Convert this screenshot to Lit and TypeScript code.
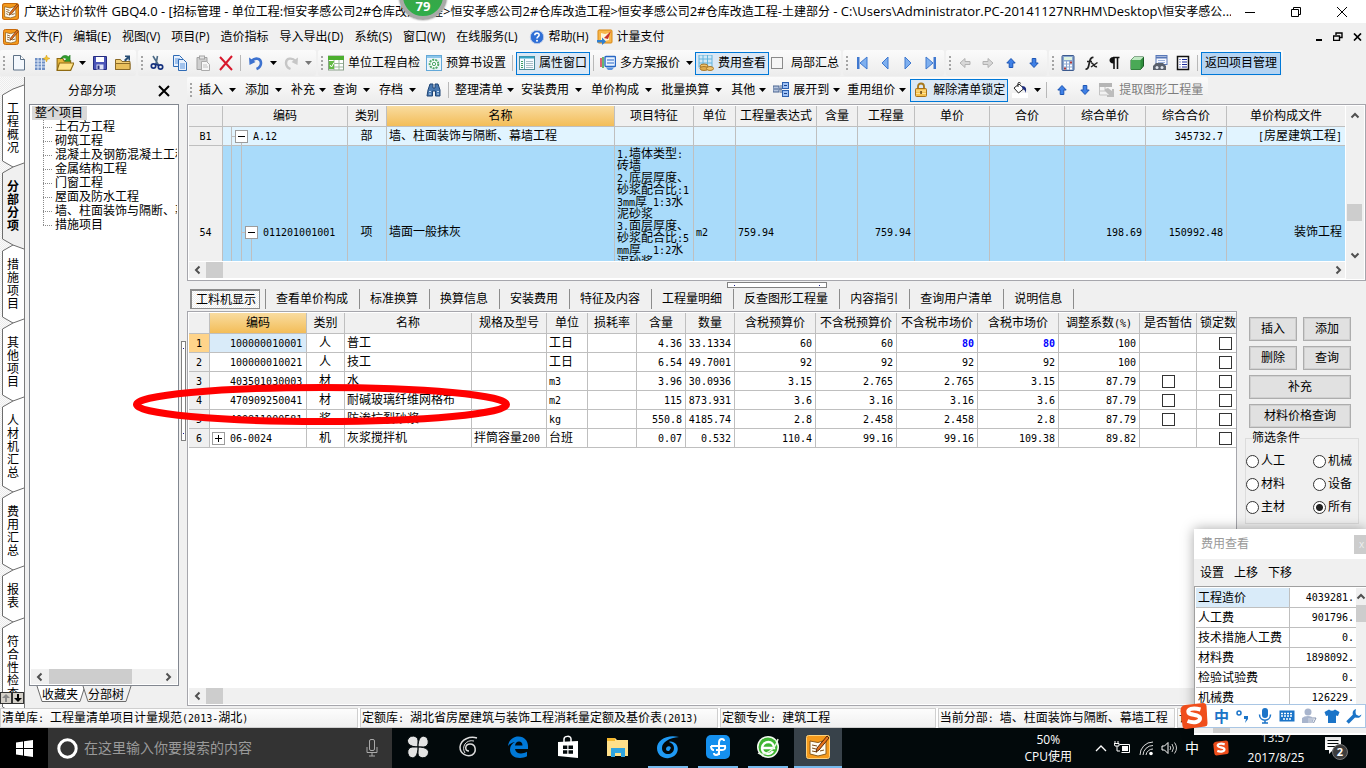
import { LitElement, html, css, svg, nothing } from "lit";
import { customElement, property, state } from "lit/decorators.js";
import { classMap } from "lit/directives/class-map.js";

/* ---------- icon library ---------- */

const glyphs: Record<string, unknown> = {
  app: svg`<rect x=".5" y=".5" width="15" height="15" rx="2" fill="#f59a1c" stroke="#c8690a"/><path d="M2.500 3.500l5 1.200 5.500-1.700v9.500l-5 1.500-5.500-1z" fill="#fffdf2" stroke="#8a5a1a" stroke-width=".7"/><path d="M4 6l3 1M4 8l3 1M4 10l2 1M9 11l3-1" stroke="#7a4a18" stroke-width=".8"/><path d="M14 1L7.500 9l-.7 2.500L9 10.200 15.300 2.500z" fill="#e8741c" stroke="#5a2a08" stroke-width=".6"/>`,
  help: svg`<circle cx="8" cy="8" r="6.700" fill="#2f6fd6" stroke="#b9c9e8"/><path d="M5.800 6.300c0-3 4.600-2.800 4.300-.2C10 7.700 8 7.600 8 9.500" fill="none" stroke="#fff" stroke-width="1.600"/><circle cx="8" cy="11.700" r="1" fill="#fff"/>`,
  pay: svg`<rect x="1" y="1" width="14" height="13" rx="1" fill="#f7b64a" stroke="#d98714"/><path d="M4 4l4 1 4-1v7l-4 1-4-1z" fill="#fff4d8"/><path d="M14 2L7 9l4 1z" fill="#c8332a"/><path d="M0 11h5V8.500L9 12.500l-4 3.500v-2.500H0z" fill="#2f7fd0"/>`,
  newdoc: svg`<path d="M2.500 .500h7l4 4v10.500h-11z" fill="#f4f8fd" stroke="#5d7186"/><path d="M9.500 .500v4h4" fill="#fff" stroke="#5d7186"/>`,
  building: svg`<rect x="1" y="3" width="10" height="12" fill="#6f8fc4"/><path d="M1 6h10M1 9h10M1 12h10M4 3v12M7.500 3v12" stroke="#dfe9f8"/><path d="M12.500 0l.9 2.400L16 3.500l-2.600 1-.9 2.500-1-2.500L9 3.500l2.500-1z" fill="#f4c430" stroke="#d19b12" stroke-width=".5"/>`,
  open: svg`<path d="M1 4h5l1 2h6v8H1z" fill="#e9b83c" stroke="#8f6a12"/><path d="M3 8h13l-3 6.500H1z" fill="#ffe48a" stroke="#8f6a12"/><path d="M4 4.500C5 1 9 .5 11 2.500l1.500-1.500V6.500H7.500L9.300 4.500C8 3 6 3 4 4.500z" fill="#2fa02c" stroke="#19701a" stroke-width=".5"/>`,
  save: svg`<path d="M1.500 1.500h13v13h-13z" fill="#4a55b8" stroke="#252c80"/><rect x="4" y="2" width="8" height="5" fill="#fff"/><rect x="4.500" y="9.500" width="7" height="5" fill="#dfe3f6"/><rect x="5.500" y="10.500" width="2" height="3.500" fill="#252c80"/>`,
  folder: svg`<path d="M.5 4.500h5l1.500 2h8v8H.5z" fill="#f2cf78" stroke="#8b6a26"/><path d="M.5 8.500h14.500v6H.5z" fill="#e9bf5c" stroke="#8b6a26"/><path d="M9 5l3-3H10V.500h5v5h-1.500V3.500l-3 3z" fill="#274d74"/>`,
  cut: svg`<path d="M4 1l5.500 9M8.500 1L7 9" stroke="#4c6a86" stroke-width="1.600"/><circle cx="4.500" cy="11" r="2.200" fill="none" stroke="#15317e" stroke-width="1.700"/><circle cx="11.500" cy="12" r="2.200" fill="none" stroke="#15317e" stroke-width="1.700"/><path d="M6 9l4 1.500" stroke="#15317e" stroke-width="1.500"/>`,
  copy: svg`<path d="M1.500 .5h6l3 3v8h-9z" fill="#e8f1fd" stroke="#2f6bb5"/><path d="M3 4h5M3 6h5M3 8h3" stroke="#5a94dc"/><path d="M6.500 4.500h5l3 3v8h-8z" fill="#e8f1fd" stroke="#2f6bb5"/><path d="M8 9h5M8 11h5M8 13h5" stroke="#5a94dc"/>`,
  paste: svg`<path d="M2 2.500h10v12H2z" fill="#cfcfcf" stroke="#a3a3a3"/><rect x="4.500" y="1" width="5" height="3" fill="#e6e6e6" stroke="#a3a3a3"/><path d="M6.500 6.500h5l3 3v6h-8z" fill="#f7f7f7" stroke="#ababab"/><path d="M8 10h4M8 12h5" stroke="#c2c2c2"/>`,
  del: svg`<path d="M2 2l12 13M14 1L2 15" stroke="#d8182c" stroke-width="2" fill="none"/>`,
  undo: svg`<path d="M3 6.500C7 2 13 3 13 8c0 3-2 5-4.500 6" fill="none" stroke="#3d72cf" stroke-width="2.600"/><path d="M1 2.500l.5 7.500 6-3z" fill="#3d72cf"/>`,
  redo: svg`<path d="M13 6.500C9 2 3 3 3 8c0 3 2 5 4.500 6" fill="none" stroke="#c6c6c6" stroke-width="2.400"/><path d="M15 2.500l-.5 7.500-6-3z" fill="#c6c6c6"/>`,
  check: svg`<rect x=".5" y="1" width="15" height="14" fill="#fff" stroke="#8aa08a"/><rect x="0" y="1" width="16" height="4" fill="#4caf2f"/><path d="M1 8.500h14M1 12h14M6 5v10M11 5v10" stroke="#9db89d"/><rect x="1" y="6" width="5" height="8" fill="#63bb44"/><path d="M2 10l1.500 2L6 7.500" stroke="#fff" fill="none"/>`,
  gear: svg`<rect x=".5" y=".5" width="15" height="15" fill="#eaf5fb" stroke="#63a8d8"/><rect x="1" y="1" width="14" height="2" fill="#8cc6ea"/><circle cx="8" cy="9" r="4.300" fill="#fff" stroke="#53a868" stroke-width="2" stroke-dasharray="2 1"/><circle cx="8" cy="9" r="1.700" fill="#eaf5fb" stroke="#53a868"/>`,
  props: svg`<rect x=".5" y="1.500" width="15" height="13" fill="#f7fbff" stroke="#4a8a96"/><path d="M1 2.500h14" stroke="#35a4c8" stroke-width="2"/><path d="M5.500 4v10" stroke="#6fa6b4"/><path d="M2 6.500h2M2 8.500h2M2 10.500h2M2 12.500h2" stroke="#3f9f62"/><path d="M7 6.500h7M7 8.500h7M7 10.500h7M7 12.500h7" stroke="#a9bdc6"/>`,
  plans: svg`<path d="M1 3v9" stroke="#d4304a" stroke-width="1.500"/><path d="M3 2v11" stroke="#3b9c42" stroke-width="1.500"/><rect x="5" y="1.500" width="10.500" height="10" rx="1" fill="#eaf3ff" stroke="#2867c4" stroke-width="1.400"/><path d="M7 5h7M7 8h7" stroke="#2867c4"/><path d="M6 12.500h8l-2 2.500H8z" fill="#5b92dc"/>`,
  fees: svg`<rect x="1" y="0" width="13" height="12" fill="#cfe8f7" stroke="#64b4dc"/><path d="M1 4h13M1 8h13M5 0v12M9.500 0v12" stroke="#64b4dc"/><ellipse cx="6" cy="11" rx="4" ry="2" fill="#f0c46c" stroke="#a9782a"/><ellipse cx="6" cy="13.500" rx="4" ry="2" fill="#e0ac4c" stroke="#a9782a"/><ellipse cx="12" cy="13.500" rx="3.500" ry="2" fill="#f0c46c" stroke="#a9782a"/>`,
  first: svg`<rect x="3" y="2" width="2.500" height="12" fill="#3f78cf"/><path d="M13 2v12L6 8z" fill="#7fb0ef" stroke="#3f78cf"/>`,
  prev: svg`<path d="M11 2v12L5 8z" fill="#7fb0ef" stroke="#3f78cf"/>`,
  next: svg`<path d="M5 2v12l6-6z" fill="#7fb0ef" stroke="#3f78cf"/>`,
  last: svg`<rect x="10.500" y="2" width="2.500" height="12" fill="#3f78cf"/><path d="M3 2v12l7-6z" fill="#7fb0ef" stroke="#3f78cf"/>`,
  left: svg`<path d="M3 8l5-4.500V6.500h5v3H8v3z" fill="#d8d8d8" stroke="#b2b2b2"/>`,
  right: svg`<path d="M13 8L8 3.500V6.500H3v3h5v3z" fill="#d8d8d8" stroke="#b2b2b2"/>`,
  up: svg`<path d="M8 3.500L3.800 8h2.400v4.500h3.600V8h2.400z" fill="#3f80e6" stroke="#1c55b4"/>`,
  down: svg`<path d="M8 12.500L3.800 8h2.400V3.500h3.600V8h2.400z" fill="#3f80e6" stroke="#1c55b4"/>`,
  calc: svg`<rect x="2" y=".5" width="12" height="15" rx="1" fill="#8aa6d0" stroke="#3c5a8e"/><rect x="4" y="2" width="8" height="3" fill="#dff3df"/><path d="M4 7.500h8M4 10.500h8M4 13.500h8" stroke="#fff" stroke-width="2" stroke-dasharray="2 1"/><path d="M10 7.500h2M4 13.500h2" stroke="#b03838" stroke-width="2"/>`,
  fx: svg`<path d="M2.500 14c2.500.500 3-2 3.700-5.500S7.500 2 10.500 2.500M4 6.500h5" fill="none" stroke="#222" stroke-width="1.700"/><path d="M8 8c3-1 2 5 6 3.500M14.500 7.500L8 12" fill="none" stroke="#222" stroke-width="1.500"/>`,
  para: svg`<path d="M8 14V3M11.500 14V3M13.500 2.500H7" stroke="#111" stroke-width="1.600"/><path d="M8 2C2 1.500 2 9 8 8.500z" fill="#111"/>`,
  cube: svg`<path d="M2 5l3-3h9.500v9l-3 3.500H2z" fill="#2f8e3c" stroke="#1c5a26"/><path d="M2 5h9.500v9.500H2z" fill="#4aa956"/><path d="M2 5l3-3h9.500l-3 3z" fill="#bfe8c2"/>`,
  book: svg`<rect x="4" y=".5" width="11" height="9" fill="#f5f8ff" stroke="#5878b8"/><path d="M4 2.500h11" stroke="#5878b8" stroke-width="2"/><path d="M6 5.500h7M6 7.500h7" stroke="#9cb2dc"/><path d="M1 11l3-3h7l3 3v4H1z" fill="#59606c"/><circle cx="5" cy="12.500" r="1.500" fill="#dfe5ee"/><circle cx="10" cy="12.500" r="1.500" fill="#dfe5ee"/>`,
  list: svg`<rect x="2.500" y="1.500" width="11" height="13" fill="#fff" stroke="#111" stroke-width="1.500"/><path d="M4.500 4.500h1M4.500 7h1M4.500 9.500h1M4.500 12h1M7 4.500h5M7 7h5M7 9.500h5M7 12h5" stroke="#1c2c9c"/>`,
  find: svg`<path d="M2 8l2-6h3v4h2V2h3l2 6v6H9.500V9h-3v5H1z" fill="#4878b0" stroke="#1e4474"/><path d="M3 9.500h2M11 9.500h2M3 12h2M11 12h2" stroke="#c4dcf2"/>`,
  expand: svg`<rect x="0" y="4" width="6" height="6" fill="#b5c4dd" stroke="#4a6490"/><path d="M1 7h4M6 7h3M8 3v8" stroke="#4a6490"/><rect x="9.500" y=".5" width="6" height="6" fill="#9fc2f5" stroke="#2c5fae"/><rect x="9.500" y="8.500" width="6" height="6" fill="#9fc2f5" stroke="#2c5fae"/><path d="M11 3.500h3M11 11.500h3" stroke="#1c3f86"/>`,
  lock: svg`<path d="M5 7V4.500c0-4 6-4 6 0V7" fill="none" stroke="#a7781c" stroke-width="1.800"/><rect x="2.500" y="6.500" width="11" height="8" rx="1" fill="#f5c04c" stroke="#a7701a"/><path d="M3 9h10M3 11.500h10" stroke="#ffe39a"/><rect x="7.300" y="9" width="1.500" height="3" fill="#6a430c"/>`,
  paint: svg`<rect x="0" y="11" width="16" height="5" fill="#fff"/><path d="M2 6l5-4 5 4.500-5.500 4.500z" fill="#fff" stroke="#222"/><path d="M6 5V1.500c0-1.500 2.500-1.500 2.500 0" fill="none" stroke="#222"/><path d="M10 4c4 0 5 3 3.500 7C13 8 12 7 10.500 7z" fill="#1c2c7e"/>`,
  extract: svg`<rect x="0" y="1" width="13" height="4" fill="#b5b5b5"/><path d="M.5 5v8h8M.5 9h6M6 5v4" stroke="#c4c4c4" fill="none"/><path d="M6 7l3-1 4 3V7h2v8H8v-2h2L6 9z" fill="#bdbdbd"/>`,
};

const icon = (name: string, size = 16) =>
  html`<svg class="ic" width=${size} height=${size} viewBox="0 0 16 16" aria-hidden="true">${glyphs[name]}</svg>`;

const chevron = (dir: "l" | "r" | "u" | "d") => {
  const d = { l: "M6.500 1.500L3 5l3.500 3.500", r: "M3.500 1.500L7 5 3.500 8.500", u: "M1.500 6.500L5 3l3.500 3.500", d: "M1.500 3.500L5 7l3.500-3.500" }[dir];
  return html`<svg width="10" height="10" viewBox="0 0 10 10" aria-hidden="true"><path d=${d} fill="none" stroke="#505050" stroke-width="2" /></svg>`;
};

/* Splits a text so that its half-width runs can be set in a face of their own. */
const mix = (text: string, cls = "m") =>
  text
    .split(/([\x20-\x7e]+)/)
    .filter((p) => p.length)
    .map((p) => (/^[\x20-\x7e]+$/.test(p) ? html`<span class=${cls}>${p}</span>` : p));

const base = css`
  * { box-sizing: border-box; }
  button { font: inherit; color: inherit; border: 0; background: none; padding: 0; margin: 0; white-space: nowrap; }
  a { color: inherit; text-decoration: none; }
  svg { display: block; flex: none; }
  .m { font-family: "DejaVu Sans Mono", monospace; font-size: 10px; white-space: pre; }
`;

/* ---------- toolbars ---------- */

type Item = { t: "ic" | "lb" | "dd" | "sep" | "grip" | "chk"; i?: string; l?: string; on?: boolean; off?: boolean; strong?: boolean; dd?: "wide" | "slim" };

const G = (...items: Item[]) => items;
const ic = (i: string): Item => ({ t: "ic", i });

const mainBar: Item[][] = [
  G(ic("newdoc"), ic("building"), ic("open"), { t: "dd" }, ic("save"), ic("folder")),
  G(ic("cut"), ic("copy"), ic("paste"), ic("del"), { t: "sep" }, ic("undo"), { t: "dd" }, ic("redo"), { t: "dd", off: true }),
  G(
    { t: "lb", i: "check", l: "单位工程自检" }, { t: "lb", i: "gear", l: "预算书设置" }, { t: "sep" },
    { t: "lb", i: "props", l: "属性窗口", on: true }, { t: "sep" }, { t: "lb", i: "plans", l: "多方案报价" }, { t: "dd" },
    { t: "lb", i: "fees", l: "费用查看", on: true }, { t: "chk", l: "局部汇总" },
  ),
  G(ic("first"), ic("prev"), ic("next"), ic("last")),
  G(ic("left"), ic("right"), ic("up"), ic("down")),
  G(ic("calc"), ic("fx"), ic("para"), ic("cube"), ic("book"), ic("list"), { t: "sep" }, { t: "lb", l: "返回项目管理", on: true, strong: true }),
];

const editBar: Item[][] = [
  G(
    { t: "lb", l: "插入", dd: "wide" }, { t: "lb", l: "添加", dd: "wide" }, { t: "lb", l: "补充", dd: "slim" },
    { t: "lb", l: "查询", dd: "wide" }, { t: "lb", l: "存档", dd: "wide" }, ic("find"), { t: "sep" },
    { t: "lb", l: "整理清单", dd: "slim" }, { t: "lb", l: "安装费用", dd: "wide" }, { t: "lb", l: "单价构成", dd: "wide" },
    { t: "lb", l: "批量换算", dd: "wide" }, { t: "lb", l: "其他", dd: "slim" }, { t: "lb", i: "expand", l: "展开到", dd: "slim" },
    { t: "lb", l: "重用组价", dd: "slim" }, { t: "lb", i: "lock", l: "解除清单锁定", on: true },
    ic("paint"), { t: "dd" }, { t: "sep" }, ic("up"), ic("down"), { t: "lb", i: "extract", l: "提取图形工程量", off: true },
  ),
];

@customElement("tool-bar")
export class ToolBar extends LitElement {
  @property({ attribute: false }) groups: Item[][] = [];
  @property({ type: Boolean, reflect: true }) compact = false;

  static styles = [
    base,
    css`
      :host { display: flex; gap: 2px; height: 27px; overflow: hidden; }
      .group { display: flex; align-items: center; padding-right: 2px; background: linear-gradient(#fbfbfb, #ececec); border-radius: 2px; height: 26px; }
      .grip { width: 7px; height: 15px; background: linear-gradient(#a4a4a4, #a4a4a4) 3px 0 / 2px 100% no-repeat; -webkit-mask: repeating-linear-gradient(#000 0 2px, transparent 2px 4px); mask: repeating-linear-gradient(#000 0 2px, transparent 2px 4px); }
      .icon { width: 23px; height: 22px; display: flex; align-items: center; justify-content: center; }
      .label { display: flex; align-items: center; gap: 4px; height: 23px; padding: 0 3px; line-height: 20px; }
      .label.on { box-shadow: inset 0 0 0 1px #0078d7; background: #dbe8f5; }
      .label.strong { background: #b5d4f2; padding: 0 4px; }
      .label.off { color: #7d7d7d; }
      .arrow { width: 12px; display: flex; justify-content: center; }
      .sep { width: 7px; height: 16px; background: linear-gradient(#b8b8b8, #b8b8b8) 3px 0 / 1px 100% no-repeat; }
      .tick { display: flex; align-items: center; gap: 8px; margin-left: 2px; }
      .tick input { appearance: none; width: 12px; height: 12px; margin: 0; border: 1px solid #8a8a8a; background: #f5f5f5; }
      :host([compact]) .grip { margin-right: 2px; }
      :host([compact]) .label.wide, :host([compact]) .label.slim { padding: 0; gap: 0; margin-left: 3px; }
      :host([compact]) .label .ic { margin-right: 4px; }
      :host([compact]) .label.on .ic, :host([compact]) .label.off .ic { margin-right: 0; }
      .label.wide .arrow { width: 19px; }
      .label.slim .arrow { width: 15px; }
    `,
  ];

  private arrow(off = false) {
    return html`<svg width="7" height="4" viewBox="0 0 7 4" aria-hidden="true"><path d="M0 0h7L3.500 4z" fill=${off ? "#777" : "#000"} /></svg>`;
  }

  private item(it: Item) {
    switch (it.t) {
      case "ic": return html`<button class="icon" aria-label=${it.i!}>${icon(it.i!, it.i === "open" ? 18 : 16)}</button>`;
      case "dd": return html`<button class="arrow" aria-label="menu">${this.arrow(it.off)}</button>`;
      case "sep": return html`<span class="sep"></span>`;
      case "chk": return html`<label class="tick"><input type="checkbox" />${it.l}</label>`;
      default:
        return html`<button class=${classMap({ label: true, on: !!it.on, off: !!it.off, strong: !!it.strong, wide: it.dd === "wide", slim: it.dd === "slim" })}>
          ${it.i ? icon(it.i) : nothing}<span>${it.l}</span>${it.dd ? html`<span class="arrow">${this.arrow()}</span>` : nothing}</button>`;
    }
  }

  render() {
    return this.groups.map((g) => html`<div class="group"><span class="grip"></span>${g.map((i) => this.item(i))}</div>`);
  }
}

/* ---------- left side ---------- */

@customElement("side-tabs")
export class SideTabs extends LitElement {
  @state() private active = "分部分项";
  private names = ["工程概况", "分部分项", "措施项目", "其他项目", "人材机汇总", "费用汇总", "报表", "符合性检查"];

  static styles = [
    base,
    css`
      :host { display: flex; flex-direction: column; width: 25px; position: relative; overflow: hidden; padding-top: 12px;
        background: repeating-conic-gradient(#ececec 0 25%, #fafafa 0 50%) 0 0 / 2px 2px; border-right: 1px solid #7b7b7b; }
      .tab { position: relative; flex: none; padding: 13px 6px 13px 7px; line-height: 13px; white-space: normal; width: 24px; word-break: break-all; text-align: center; }
      .tab svg { position: absolute; left: 0; top: 0; overflow: visible; }
      .tab span { position: relative; display: block; width: 12px; }
      .tab.on { font-weight: bold; z-index: 1; }
      .spin { position: absolute; left: 0; bottom: 4px; display: flex; z-index: 2; }
      .spin button { width: 12px; height: 12px; background: #d4d0c8; border: 1px solid #333; }
      .spin svg { margin: auto; }
    `,
  ];

  render() {
    return html`
      ${this.names.map((n) => {
        const h = n.length * 13 + 26;
        const on = n === this.active;
        return html`<button class=${classMap({ tab: true, on })} @click=${() => (this.active = n)}>
          <svg width="24" height=${h} viewBox="0 0 24 ${h}" aria-hidden="true">
            <path d="M24 -4L13 0L2.500 6V${h - 6}L13 ${h}L24 ${h + 4}" fill=${on ? "#f0f0f0" : "#fff"} stroke="#6c6c6c" />
          </svg><span>${n}</span></button>`;
      })}
      <div class="spin">
        <button aria-label="上"><svg width="8" height="8" viewBox="0 0 8 8"><path d="M4 0L0 4h3v4h2V4h3z" fill="#888" /></svg></button>
        <button aria-label="下"><svg width="8" height="8" viewBox="0 0 8 8"><path d="M4 8L0 4h3V0h2v4h3z" fill="#000" /></svg></button>
      </div>`;
  }
}

@customElement("project-tree")
export class ProjectTree extends LitElement {
  private nodes = ["土石方工程", "砌筑工程", "混凝土及钢筋混凝土工程", "金属结构工程", "门窗工程", "屋面及防水工程", "墙、柱面装饰与隔断、幕墙工程", "措施项目"];

  static styles = [
    base,
    css`
      :host { display: flex; flex-direction: column; width: 154px; padding: 0 0 5px 4px; }
      header { display: flex; align-items: center; height: 27px; padding: 0 9px 0 39px; justify-content: space-between; }
      .box { flex: 1; min-height: 0; border: 1px solid #828790; background: #fff; display: flex; flex-direction: column; padding: 1px; }
      .tree { flex: 1; overflow: hidden; line-height: 14px; white-space: nowrap; padding-left: 1px; }
      .root { display: table; background: #d9d9d9; padding: 0 4px 0 3px; }
      ul { list-style: none; margin: 0 0 0 11px; padding: 0; background: repeating-linear-gradient(#8a8a8a 0 1px, transparent 1px 2px) 0 0 / 1px 105px no-repeat; }
      li { padding-left: 12px; height: 14px; background: repeating-linear-gradient(90deg, #8a8a8a 0 1px, transparent 1px 2px) 0 7px / 10px 1px no-repeat; }
      .scroll { display: flex; align-items: center; height: 15px; background: #f0f0f0; padding: 0 4px; justify-content: space-between; }
      .thumb { flex: 1; margin: 0 31px 0 4px; height: 15px; background: #cdcdcd; }
      nav { display: flex; padding-left: 8px; height: 17px; }
      nav button { position: relative; width: 46px; line-height: 15px; }
      nav button svg { position: absolute; left: 0; top: 0; overflow: visible; }
      nav span { position: relative; }
    `,
  ];

  render() {
    return html`
      <header><span>分部分项</span>
        <button aria-label="关闭"><svg width="12" height="12" viewBox="0 0 12 12"><path d="M1 1l10 10M11 1L1 11" stroke="#000" stroke-width="2" /></svg></button></header>
      <div class="box">
        <div class="tree"><span class="root">整个项目</span><ul>${this.nodes.map((n) => html`<li>${n}</li>`)}</ul></div>
        <div class="scroll">${chevron("l")}<span class="thumb"></span>${chevron("r")}</div>
      </div>
      <nav>
        ${["收藏夹", "分部树"].map(
          (n, i) => html`<button><svg width="46" height="16" viewBox="0 0 46 16" aria-hidden="true"><path d="M0 0l5 15.500h38L48 0" fill=${i ? "#f0f0f0" : "#fff"} stroke="#6c6c6c" /></svg><span>${n}</span></button>`,
        )}
      </nav>`;
  }
}

/* ---------- data grids ---------- */

const gridStyles = css`
  table { border-collapse: separate; border-spacing: 0; table-layout: fixed; width: 0; line-height: 14px; }
  th, td { padding: 0 3px 0 2px; border: solid #bfbfbf; border-width: 0 1px 1px 0; overflow: hidden; white-space: nowrap; font-weight: normal; text-align: left; }
  thead th { height: 21px; background: #f0f0f0; text-align: center; padding: 0; }
  thead th.hot { background: linear-gradient(#f9dca0, #f3bd58); }
  tbody th { background: #f0f0f0; text-align: center; padding: 0; }
  .r { text-align: right; }
  .c { text-align: center; }
  .pm { display: inline-flex; width: 13px; height: 13px; border: 1px solid #9c9c9c; background: #fff; align-items: center; justify-content: center; vertical-align: middle; }
  .hs { display: flex; align-items: center; height: 16px; background: #f0f0f0; padding: 0 2px 0 4px; margin: 1px 0; }
  .hs i { width: 17px; height: 16px; background: #cdcdcd; margin-left: 3px; }
  .hs svg:last-child { margin-left: auto; }
`;

const plus = html`<svg width="9" height="9" viewBox="0 0 9 9"><path d="M1 4.500h7M4.500 1v7" stroke="#000" /></svg>`;
const minus = html`<svg width="9" height="9" viewBox="0 0 9 9"><path d="M1 4.500h7" stroke="#000" /></svg>`;

@customElement("bill-grid")
export class BillGrid extends LitElement {
  private cols: [string, number][] = [
    ["", 34], ["编码", 125], ["类别", 39], ["名称", 228], ["项目特征", 79], ["单位", 42], ["工程量表达式", 81], ["含量", 41],
    ["工程量", 57], ["单价", 75], ["合价", 75], ["综合单价", 81], ["综合合价", 81], ["单价构成文件", 119],
  ];
  private feature = ["1.墙体类型:", "砖墙", "2.底层厚度、", "砂浆配合比:1", "3mm厚 1:3水", "泥砂浆", "3.面层厚度、", "砂浆配合比:5", "mm厚  1:2水", "泥砂浆"];

  static styles = [
    base, gridStyles,
    css`
      :host { display: flex; height: 177px; border: 1px solid #a6a6ac; padding: 1px; background: #fff; }
      .left { flex: 1; min-width: 0; display: flex; flex-direction: column; }
      .view { flex: 1; min-height: 0; overflow: hidden; }
      .part td { background-color: #e1f4ff; height: 19px; }
      .item td { background-color: #a9dbfa; height: 173px; }
      .part th { height: 19px; }
      td.k1 { padding-left: 12px; background-image: linear-gradient(#bfbfbf, #bfbfbf), linear-gradient(#bfbfbf, #bfbfbf), linear-gradient(#bfbfbf, #bfbfbf); background-size: 1px 100%, 4px 1px, 1px 3px; background-position: 8px 0, 8px 50%, 18px 100%; background-repeat: no-repeat; }
      td.k2 { padding-left: 22px; background-image: linear-gradient(#bfbfbf, #bfbfbf), linear-gradient(#bfbfbf, #bfbfbf), linear-gradient(#bfbfbf, #bfbfbf), linear-gradient(#bfbfbf, #bfbfbf); background-size: 1px 100%, 1px 100%, 1px 50%, 4px 1px; background-position: 8px 0, 18px 0, 28px 100%, 18px 50%; background-repeat: no-repeat; }
      .pm { margin-right: 5px; }
      td.feat { vertical-align: top; padding-top: 2px; line-height: 12px; }
      td.feat div { height: 12px; }
      .vs { width: 18px; background: #f0f0f0; display: flex; flex-direction: column; align-items: center; padding: 5px 1px 19px 0; margin-left: 1px; }
      .vs i { width: 15px; height: 17px; background: #cdcdcd; margin: auto 0 29px; }
    `,
  ];

  render() {
    return html`
      <div class="left">
        <div class="view">
          <table>
            <colgroup>${this.cols.map((c) => html`<col width=${c[1]} />`)}</colgroup>
            <thead><tr>${this.cols.map((c) => html`<th class=${c[0] === "名称" ? "hot" : ""}>${c[0]}</th>`)}</tr></thead>
            <tbody>
              <tr class="part"><th>${mix("B1")}</th><td class="k1"><span class="pm">${minus}</span>${mix("A.12")}</td><td class="c">部</td>
                <td>墙、柱面装饰与隔断、幕墙工程</td><td></td><td></td><td></td><td></td><td></td><td></td><td></td><td></td>
                <td class="r">${mix("345732.7")}</td><td class="r">${mix("[房屋建筑工程]")}</td></tr>
              <tr class="item"><th>${mix("54")}</th><td class="k2"><span class="pm">${minus}</span>${mix("011201001001")}</td><td class="c">项</td>
                <td>墙面一般抹灰</td><td class="feat">${this.feature.map((f) => html`<div>${mix(f)}</div>`)}</td><td>${mix("m2")}</td>
                <td>${mix("759.94")}</td><td></td><td class="r">${mix("759.94")}</td><td></td><td></td>
                <td class="r">${mix("198.69")}</td><td class="r">${mix("150992.48")}</td><td class="r">装饰工程</td></tr>
            </tbody>
          </table>
        </div>
        <div class="hs">${chevron("l")}<i></i>${chevron("r")}</div>
      </div>
      <div class="vs">${chevron("u")}<i></i>${chevron("d")}</div>`;
  }
}

@customElement("resource-grid")
export class ResourceGrid extends LitElement {
  private cols: [string, number][] = [
    ["", 21], ["编码", 97], ["类别", 38], ["名称", 127], ["规格及型号", 75], ["单位", 41], ["损耗率", 49], ["含量", 49], ["数量", 49],
    ["含税预算价", 81], ["不含税预算价", 81], ["不含税市场价", 81], ["含税市场价", 81], ["调整系数(%)", 81], ["是否暂估", 57], ["锁定数", 57],
  ];
  private rows = [
    ["100000010001", "人", "普工", "", "工日", "", "4.36", "33.1334", "60", "60", "80", "80", "100"],
    ["100000010021", "人", "技工", "", "工日", "", "6.54", "49.7001", "92", "92", "92", "92", "100"],
    ["403501030003", "材", "水", "", "m3", "", "3.96", "30.0936", "3.15", "2.765", "2.765", "3.15", "87.79"],
    ["470909250041", "材", "耐碱玻璃纤维网格布", "", "m2", "", "115", "873.931", "3.6", "3.16", "3.16", "3.6", "87.79"],
    ["400811000581", "浆", "防渗抗裂砂浆", "", "kg", "", "550.8", "4185.74", "2.8", "2.458", "2.458", "2.8", "87.79"],
    ["06-0024", "机", "灰浆搅拌机", "拌筒容量200", "台班", "", "0.07", "0.532", "110.4", "99.16", "99.16", "109.38", "89.82"],
  ];

  static styles = [
    base, gridStyles,
    css`
      :host { display: flex; flex-direction: column; flex: 1; min-width: 0; border: 1px solid #a6a6ac; padding: 1px 0 0 1px; background: #fff; }
      .view { flex: 1; min-height: 0; overflow: hidden; }
      tbody td, tbody th { height: 19px; }
      tbody th.cur { background: #ffd48a; }
      td.cur { background: #d9ebf9; }
      td.code { padding-left: 20px; }
      td.code.tree { padding-left: 2px; }
      td.tick { padding: 0; }
      .pm { margin-right: 5px; }
      .edit, .edit .m { color: #00f; font-weight: bold; }
      input { appearance: none; display: block; width: 13px; height: 13px; margin: 0 auto; border: 1px solid #333; background: #fff; }
      thead th:last-child { text-align: left; padding-left: 3px; }
    `,
  ];

  render() {
    return html`
      <div class="view">
        <table>
          <colgroup>${this.cols.map((c) => html`<col width=${c[1]} />`)}</colgroup>
          <thead><tr>${this.cols.map((c) => html`<th class=${c[0] === "编码" ? "hot" : ""}>${mix(c[0])}</th>`)}</tr></thead>
          <tbody>
            ${this.rows.map(
              (row, r) => html`<tr>
                <th class=${r === 0 ? "cur" : ""}>${mix(String(r + 1))}</th>
                ${row.map((v, c) => {
                  const cls = classMap({
                    code: c === 0, cur: c === 0 && r === 0, tree: c === 0 && r === 5, c: c === 1, r: c > 5, edit: r === 0 && (c === 10 || c === 11),
                  });
                  return html`<td class=${cls}>${c === 0 && r === 5 ? html`<span class="pm">${plus}</span>` : nothing}${mix(v)}</td>`;
                })}
                <td class="tick">${r > 1 && r < 5 ? html`<input type="checkbox" aria-label="是否暂估" />` : nothing}</td>
                <td class="tick"><input type="checkbox" aria-label="锁定数" /></td>
              </tr>`,
            )}
          </tbody>
        </table>
      </div>
      <div class="hs">${chevron("l")}<i></i></div>`;
  }
}

@customElement("action-panel")
export class ActionPanel extends LitElement {
  static styles = [
    base,
    css`
      :host { display: block; width: 129px; padding: 6px 7px 0 8px; }
      .acts { display: grid; grid-template-columns: 48px 48px; gap: 5px 6px; padding-left: 4px; }
      .acts button { height: 24px; border: 1px solid #adadad; box-shadow: inset 0 0 0 1px #d0d0d0; background: #e1e1e1; line-height: 20px; }
      .acts .wide { grid-column: span 2; }
      fieldset { margin: 3px 0 0; border: 1px solid #dcdcdc; padding: 6px 0 6px; min-width: 0; display: grid; grid-template-columns: 67px auto; row-gap: 3px; }
      legend { padding: 0; margin-left: 6px; line-height: 14px; }
      label { display: flex; align-items: center; gap: 2px; height: 20px; }
      input { appearance: none; width: 13px; height: 13px; margin: 0; border: 1px solid #333; border-radius: 50%; background: #fff; }
      input:checked { background: radial-gradient(circle, #222 3px, #fff 4px); }
    `,
  ];

  render() {
    return html`
      <div class="acts">
        <button>插入</button><button>添加</button><button>删除</button><button>查询</button>
        <button class="wide">补充</button><button class="wide">材料价格查询</button>
      </div>
      <fieldset>
        <legend>筛选条件</legend>
        ${["人工", "机械", "材料", "设备", "主材", "所有"].map(
          (n) => html`<label><input type="radio" name="filter" .checked=${n === "所有"} />${n}</label>`,
        )}
      </fieldset>`;
  }
}

/* ---------- floating windows ---------- */

@customElement("fee-window")
export class FeeWindow extends LitElement {
  private rows = [["工程造价", "4039281."], ["人工费", "901796."], ["技术措施人工费", "0."], ["材料费", "1898092."], ["检验试验费", "0."], ["机械费", "126229."]];

  static styles = [
    base,
    css`
      :host { display: flex; flex-direction: column; background: #f0f0f0; box-shadow: 0 0 12px rgba(0, 0, 0, 0.35); overflow: hidden; }
      header { display: flex; height: 30px; align-items: center; justify-content: space-between; background: #fff; color: #999; padding-left: 7px; flex: none; }
      header button { width: 12px; height: 19px; background: #ccc; color: #eee; text-align: left; padding-left: 5px; font-size: 10px; overflow: hidden; }
      nav { display: flex; gap: 10px; padding-left: 6px; height: 27px; align-items: center; flex: none; }
      .body { display: flex; align-items: flex-start; flex: 1; min-height: 0; background: #fff; border-top: 1px solid #a0a0a0; border-left: 1px solid #a0a0a0; padding: 1px 0 0 1px; overflow: hidden; }
      table { border-collapse: separate; border-spacing: 0; table-layout: fixed; width: 160px; line-height: 16px; }
      td, th { border: solid #bfbfbf; border-width: 0 1px 1px 0; height: 20px; padding: 0 2px; font-weight: normal; text-align: left; white-space: nowrap; }
      th { width: 94px; }
      td { text-align: right; border-right: 0; }
      tr:first-child th { background: #d9ebf9; }
      .vs { flex: 1; align-self: stretch; background: #f0f0f0; padding-top: 4px; }
      .vs i { display: block; height: 17px; margin-top: 3px; background: #cdcdcd; }
      .foot { height: 7px; background: #f0f0f0; border-bottom: 2px solid #fff; flex: none; }
      .foot i { display: block; width: 17px; height: 5px; margin-left: 19px; background: #cdcdcd; }
    `,
  ];

  render() {
    return html`
      <header><span>费用查看</span><button>x</button></header>
      <nav><button>设置</button><button>上移</button><button>下移</button></nav>
      <div class="body">
        <table><tbody>${this.rows.map((r) => html`<tr><th>${r[0]}</th><td>${mix(r[1])}</td></tr>`)}</tbody></table>
        <div class="vs">${chevron("u")}<i></i></div>
      </div>
      <div class="foot"><i></i></div>`;
  }
}

const sogou = (size: number) => html`<svg width=${size} height=${size} viewBox="0 0 28 28" aria-hidden="true">
  <path d="M5 3L23 1Q26 1 26.500 4L27.500 21Q27.500 24 25 24.500L6 27Q3 27 2.500 24L.500 8Q.500 4 5 3z" fill="#f04e1c" />
  <path d="M20.500 7.500C12 5 7.500 7.500 8.500 10.500c1 3 11 1.500 11.500 5.500.3 4-6 5.500-12.500 3" fill="none" stroke="#fff" stroke-width="4" /></svg>`;

@customElement("ime-bar")
export class ImeBar extends LitElement {
  static styles = [
    base,
    css`
      :host { display: flex; align-items: center; gap: 6px; height: 24px; background: #fff; border: 1px solid #a9c6e4; border-left: 0; padding: 0 2px 0 0; color: #1b74c8; }
      .logo { margin: -4px 0 -4px -14px; }
      b { font-size: 15px; line-height: 20px; }
    `,
  ];
  render() {
    return html`
      <span class="logo">${sogou(28)}</span><b>中</b>
      <svg width="16" height="16" viewBox="0 0 16 16"><circle cx="4" cy="5" r="2" fill="none" stroke="#1b74c8" stroke-width="1.500" /><path d="M9 8h4v3l-3 4 1-4H9z" fill="#1b74c8" /></svg>
      <svg width="16" height="16" viewBox="0 0 16 16"><rect x="5" y="0" width="6" height="10" rx="3" fill="#1b74c8" /><path d="M2.500 6.500C2.500 14 13.500 14 13.500 6.500M8 12v3.500M5 15h6" fill="none" stroke="#1b74c8" stroke-width="1.500" /></svg>
      <svg width="16" height="16" viewBox="0 0 16 16"><rect x=".5" y="2.500" width="15" height="11" fill="#1b74c8" /><path d="M2 5.500h12M2 8h12M4 11h8" stroke="#fff" stroke-width="1.400" stroke-dasharray="2 1" /></svg>
      <svg width="17" height="16" viewBox="0 0 17 16"><circle cx="7" cy="4" r="3.500" fill="#a8b4cc" /><path d="M1 15V10q2-2 6-2t6 3v4z" fill="#a8b4cc" /><path d="M9 10v5M11 10h4l-2.500 5" stroke="#fff" stroke-width="2.500" fill="none" /><path d="M9 10v5M11 10h4l-2.500 5" stroke="#8290ac" fill="none" /></svg>
      <svg width="16" height="16" viewBox="0 0 16 16"><path d="M5 1.500q3 2.500 6 0l4.500 2.500-1.500 4-2-.5v7.500H4V7.500L2 8 .500 4z" fill="#1b74c8" /></svg>
      <svg width="16" height="16" viewBox="0 0 16 16"><path d="M1.500 14.500L9 7" stroke="#1b74c8" stroke-width="3.500" /><path d="M10 1a4.500 4.500 0 1 0 5.500 5.500L13 8 10 6.500 9.500 4z" fill="#1b74c8" /></svg>`;
  }
}

/* ---------- Windows task bar ---------- */

const apps: { n: string; run?: boolean; on?: boolean; g: unknown }[] = [
  { n: "fan", g: svg`<g fill="#e4e4e4" stroke="#02090b"><path d="M12 12C4 12 0 8 2 4S11 0 12 5z"/><path d="M12 12C12 4 15 0 19 1.500S24 11 18 12z"/><path d="M12 12C20 12 24 15 22 19.500S13 24 12 19z"/><path d="M12 12C12 20 9 24 5 22.500S0 13 6 12z"/></g>` },
  { n: "swirl", g: svg`<path d="M21 3C14 1 5 4 4 12c0 7 7 10 12 8 5-3 4-11-2-11-5 0-6 7-1 7" fill="none" stroke="#ddd" stroke-width="1.500"/><path d="M18 6C10 4 5 12 9 18" fill="none" stroke="#ddd"/>` },
  { n: "edge", g: svg`<path d="M2 11C3 4 8 1.500 12.500 1.500 18.500 1.500 22 6 22 11v3H9c.5 3 3 4.500 6 4.500 2 0 4-.5 6-1.700v4.500C19 22.500 16.500 23 14 23 8 23 4 19.500 4 14.500 4 11 6 8.500 9 7 6 7.500 3.500 9 2 11zM9 10.500h7.500C16.500 8 15 6.500 13 6.500S9.500 8 9 10.500z" fill="#0078d7"/>` },
  { n: "store", g: svg`<path d="M2 7l20-1v17L2 21z" fill="#fff"/><path d="M8 8V4c0-3 7-4 7 0v4" fill="none" stroke="#fff" stroke-width="1.500"/><path d="M7 10.500h4.300v3.500H7zM12.500 10.500H17V14h-4.500zM7 15.200h4.300v3.500H7zM12.500 15.200H17v3.500h-4.500z" fill="#02090b"/>` },
  { n: "files", g: svg`<path d="M1 3h8l2 2h11v16H1z" fill="#ffe08a"/><path d="M1 3h8v3H1z" fill="#f5b82e"/><path d="M5 13h14v9h-4v-4H9v4H5z" fill="#2fa4e0"/>` },
  { n: "glodon", run: true, g: svg`<path d="M23 2C11-1 1 5 1 13c0 8 7 11 12 10 8-1 11-9 7-14-2-2-5-3-7-2 3 1 5 3 5 6 0 4-3 6-6 6s-6-2-6-6C6 7 13 3 23 2z" fill="#1f9af5"/><path d="M10 14c0-3 4-4 5-1-1 1-1 2-2 3-1 0-3 0-3-2z" fill="#1f9af5"/>` },
  { n: "loop", run: true, g: svg`<rect x="0" y="0" width="24" height="24" rx="5" fill="#1590ee"/><path d="M13 20V8q0-4 3-4 2 0 2 2M5 11h14q1 4-3 4H10M5 11q0 4 3 4M13 17q0 3-3 3-2 0-2-2" fill="none" stroke="#fff" stroke-width="2"/>` },
  { n: "browser", run: true, g: svg`<circle cx="12" cy="12" r="11" fill="#f4fbf2"/><circle cx="12" cy="12" r="9.500" fill="#3fb532"/><path d="M6 13h12c0-8-11-8-12 0 0 6 8 8 11 3" fill="none" stroke="#fff" stroke-width="2.400"/><path d="M2 18C8 22 20 14 22 4" fill="none" stroke="#e8f6e2" stroke-width="1.400"/>` },
  { n: "pricing", run: true, on: true, g: svg`<rect x=".5" y=".5" width="23" height="23" rx="2" fill="#f59a1c" stroke="#ffd27a"/><path d="M4 6l8 1.500L20 5v14l-8 2-8-2z" fill="#fffdf2" stroke="#8a5a1a"/><path d="M6 10l5 1M6 13l4 1M6 16l5 1M14 16l4-1" stroke="#7a4a18"/><path d="M21 1L11 13l-1 4 3-2L23 3z" fill="#e8741c" stroke="#5a2a08"/>` },
];

@customElement("task-bar")
export class TaskBar extends LitElement {
  static styles = [
    base,
    css`
      :host { display: flex; height: 40px; background: #02090b; color: #fff; align-items: stretch; }
      .start { width: 48px; display: flex; align-items: center; justify-content: center; background: #000; }
      .search { display: flex; align-items: center; width: 344px; background: #333; padding: 0 14px 0 9px; gap: 6px; }
      .search input { flex: 1; min-width: 0; border: 0; background: none; font: inherit; font-size: 14px; color: #fff; padding: 0; outline: 0; }
      .search input::placeholder { color: #9a9a9a; opacity: 1; }
      .apps { display: flex; padding-left: 2px; gap: 2px; }
      .apps button { width: 48px; display: flex; align-items: center; justify-content: center; border-bottom: 2px solid transparent; }
      .apps .run { background: linear-gradient(#76b9ed, #76b9ed) 50% 100% / 40px 2px no-repeat border-box; }
      .apps .on { background: #38424a; border-color: #76b9ed; }
      .tray { margin-left: auto; display: flex; align-items: center; gap: 7px; padding-right: 18px; }
      .two { text-align: center; line-height: 17px; }
      .cpu { margin-right: 16px; }
      .clock { width: 66px; line-height: 20px; margin: 0 8px 0 7px; align-self: flex-start; white-space: nowrap; }
      .zh { font-size: 14px; margin-right: 7px; }
    `,
  ];

  render() {
    return html`
      <button class="start" aria-label="开始"><svg width="17" height="17" viewBox="0 0 17 17"><path d="M0 2.500L7 1.500V8H0zM8 1.300L17 0v8H8zM0 9h7v6.500L0 14.500zM8 9h9v8l-9-1.300z" fill="#fff" /></svg></button>
      <label class="search">
        <svg width="21" height="21" viewBox="0 0 21 21"><circle cx="10.500" cy="10.500" r="8.700" fill="none" stroke="#fff" stroke-width="3" /></svg>
        <input type="text" aria-label="搜索" placeholder="在这里输入你要搜索的内容" />
        <svg width="12" height="18" viewBox="0 0 12 18"><rect x="3.500" y=".5" width="5" height="11" rx="1.500" fill="none" stroke="#aaa" /><path d="M1 8v5.500h10V8M6 13.500V17M3 17h6" fill="none" stroke="#aaa" /></svg>
      </label>
      <div class="apps">
        ${apps.map((a) => html`<button class=${classMap({ run: !!a.run, on: !!a.on })} aria-label=${a.n}><svg width="24" height="24" viewBox="0 0 24 24">${a.g}</svg></button>`)}
      </div>
      <div class="tray">
        <div class="two cpu">50%<br />CPU使用</div>
        <svg width="12" height="8" viewBox="0 0 12 8"><path d="M1 7l5-5 5 5" fill="none" stroke="#fff" stroke-width="1.300" /></svg>
        <svg width="17" height="16" viewBox="0 0 17 16"><path d="M5.500 4.500h10v8h-8" fill="none" stroke="#fff" /><rect x="8" y="6" width="6" height="5" fill="#fff" /><path d="M1 1v2M4 1v2M0 3.500h5v2.500H1zM3 6v5h3" fill="none" stroke="#fff" /></svg>
        <svg width="16" height="16" viewBox="0 0 16 16"><path d="M2 15A13 13 0 0 1 15 2M5 15A10 10 0 0 1 15 5.500M8 15a7 7 0 0 1 7-6" fill="none" stroke="#ddd" /><circle cx="13" cy="13.500" r="1.800" fill="#fff" /></svg>
        <svg width="17" height="16" viewBox="0 0 17 16"><path d="M1 6h2.500L7 2.500v11L3.500 10H1z" fill="none" stroke="#fff" /><path d="M9 6q1.500 2 0 4M11 4q3 4 0 8M13.500 2.500q4 5.500 0 11" fill="none" stroke="#ccc" /></svg>
        <span class="zh">中</span>
        <span>${sogou(16)}</span>
        <div class="two clock">13:57<br />2017/8/25</div>
        <svg width="24" height="24" viewBox="0 0 24 24"><path d="M1 1h16v13H9l-4 4v-4H1z" fill="#fff" /><path d="M3.500 4.500h11M3.500 7.500h11M3.500 10.500h8" stroke="#02090b" /><circle cx="16" cy="16" r="7.500" fill="#3c3c3c" stroke="#777" /><text x="16" y="20" text-anchor="middle" font-size="11" font-weight="bold" fill="#fff">2</text></svg>
      </div>`;
  }
}

/* ---------- application frame ---------- */

@customElement("app-root")
export class AppRoot extends LitElement {
  @state() private tab = "工料机显示";
  private caption =
    "广联达计价软件 GBQ4.0 - [招标管理 - 单位工程:恒安孝感公司2#仓库改造工程>恒安孝感公司2#仓库改造工程>恒安孝感公司2#仓库改造工程-土建部分 - C:\\Users\\Administrator.PC-20141127NRHM\\Desktop\\恒安孝感公...";
  private menu = ["文件(F)", "编辑(E)", "视图(V)", "项目(P)", "造价指标", "导入导出(D)", "系统(S)", "窗口(W)", "在线服务(L)"];
  private tabs = ["工料机显示", "查看单价构成", "标准换算", "换算信息", "安装费用", "特征及内容", "工程量明细", "反查图形工程量", "内容指引", "查询用户清单", "说明信息"];

  static styles = [
    base,
    css`
      :host { display: flex; flex-direction: column; height: 100vh; position: relative; overflow: hidden; background: #f0f0f0; color: #000;
        font: 12px/16px "Open Sans", "Noto Sans CJK SC", sans-serif; }
      .title { display: flex; align-items: center; height: 23px; background: #fff; padding: 0 18px 0 2px; gap: 5px; white-space: nowrap; flex: none; }
      .title .name { flex: 1; min-width: 0; overflow: hidden; line-height: 22px; white-space: pre; }
      .title .latin { font-size: 13px; }
      .wins { display: flex; gap: 34px; align-items: center; padding-left: 8px; }
      .menu { display: flex; align-items: center; height: 27px; padding: 0 4px 0 3px; gap: 11px; white-space: nowrap; flex: none; }
      .menu a { display: flex; gap: 4px; align-items: center; line-height: 24px; }
      .menu .lead { margin-right: -5px; }
      .menu .end { margin-left: -3px; }
      .mdi { margin-left: auto; display: flex; gap: 10px; align-items: center; }
      .body { flex: 1; min-height: 0; display: flex; }
      .split { width: 8px; padding: 264px 1px 0 2px; }
      .grip-v { display: flex; flex-direction: column; justify-content: space-between; align-items: center; width: 5px; height: 100px; border: 1px solid #808080; background: #fff; padding: 6px 0; }
      .grip-v i, .grip-h i { width: 1px; height: 1px; background: #1c1c90; }
      .work { flex: 1; min-width: 0; display: flex; flex-direction: column; padding-bottom: 2px; }
      .work tool-bar, .work bill-grid { flex: none; }
      .tabs { display: flex; align-items: flex-end; height: 30px; padding: 0 0 2px 3px; position: relative; flex: none; }
      .tabs button { height: 20px; padding: 0 11px 0 10px; border-right: 1px solid #8c8c8c; line-height: 20px; }
      .tabs button.on { padding: 0 3px 0 4px; border: 1px solid #8c8c8c; border-width: 2px 1px 1px 2px; margin-right: 5px; line-height: 17px; background: repeating-conic-gradient(#ededed 0 25%, #fff 0 50%) 0 0 / 2px 2px; }
      .tabs .rule { width: 1px; height: 20px; background: #8c8c8c; }
      .grip-h { position: absolute; left: 50%; top: 1px; margin-left: -50px; width: 100px; height: 6px; border: 1px solid #808080; background: #fff; display: flex; align-items: center; justify-content: space-between; padding: 0 6px; }
      .lower { flex: 1; min-height: 0; display: flex; }
      .status { display: flex; gap: 2px; height: 20px; flex: none; background: #fff; white-space: nowrap; }
      .status div { border: 1px solid #cfcfcf; background: linear-gradient(#fdfdfd, #f0f0f0); line-height: 18px; padding-left: 1px; overflow: hidden; }
      .status .a { flex: 359 1 0; } .status .b { flex: 215 1 0; } .status .c { flex: 237 1 0; } .status .d { flex: 188 1 0; }
      task-bar { flex: none; }
      fee-window { position: absolute; right: 0; bottom: 33px; width: 172px; height: 206px; }
      ime-bar { position: absolute; right: 0; bottom: 40px; width: 172px; }
      .badge { position: absolute; left: 399px; top: -28px; width: 48px; height: 48px; border-radius: 50%; background: linear-gradient(#3f9f45, #2fae4a); border: 4px solid #a8aaa8; box-shadow: 0 0 2px #777; color: #fff; font-weight: bold; font-size: 13px; text-align: center; padding-top: 22px; line-height: 16px; }
      .mark { position: absolute; left: 132px; top: 383px; pointer-events: none; }
    `,
  ];

  render() {
    return html`
      <div class="title">
        ${icon("app", 17)}
        <span class="name">${mix(this.caption, "latin")}</span>
        <div class="wins">
          <button aria-label="最小化"><svg width="12" height="12" viewBox="0 0 12 12"><path d="M1 6.500h10" stroke="#000" /></svg></button>
          <button aria-label="还原"><svg width="12" height="12" viewBox="0 0 12 12"><path d="M1.500 3.500h7v7h-7zM3.500 3.500v-2h7v7h-2" fill="none" stroke="#000" /></svg></button>
          <button aria-label="关闭"><svg width="12" height="12" viewBox="0 0 12 12"><path d="M1 1l10 10M11 1L1 11" stroke="#000" /></svg></button>
        </div>
      </div>
      <div class="menu">
        <span class="lead">${icon("app")}</span>
        ${this.menu.map((m) => html`<a href="#">${m}</a>`)}
        <a href="#">${icon("help")}帮助(H)</a>
        <a class="end" href="#">${icon("pay")}计量支付</a>
        <div class="mdi">
          <button aria-label="最小化"><svg width="8" height="9" viewBox="0 0 8 9"><path d="M1 8h6" stroke="#000" stroke-width="2" /></svg></button>
          <button aria-label="还原"><svg width="10" height="9" viewBox="0 0 10 9"><path d="M.5 4h6v4.500h-6zM3 3V1h6v4.500H7" fill="none" stroke="#000" stroke-width="1.400" /></svg></button>
          <button aria-label="关闭"><svg width="9" height="8" viewBox="0 0 9 8"><path d="M1 .5l7 7M8 .5l-7 7" stroke="#000" stroke-width="1.700" /></svg></button>
        </div>
      </div>
      <tool-bar .groups=${mainBar}></tool-bar>
      <div class="body">
        <side-tabs></side-tabs>
        <project-tree></project-tree>
        <div class="split"><div class="grip-v"><i></i><i></i></div></div>
        <div class="work">
          <tool-bar compact .groups=${editBar}></tool-bar>
          <bill-grid></bill-grid>
          <div class="tabs">
            ${this.tabs.map((t) => html`<button class=${t === this.tab ? "on" : ""} @click=${() => (this.tab = t)}>${t}</button>${t === this.tab ? html`<span class="rule"></span>` : nothing}`)}
            <div class="grip-h"><i></i><i></i></div>
          </div>
          <div class="lower"><resource-grid></resource-grid><action-panel></action-panel></div>
        </div>
      </div>
      <div class="status">
        <div class="a">${mix("清单库: 工程量清单项目计量规范(2013-湖北)")}</div>
        <div class="a">${mix("定额库: 湖北省房屋建筑与装饰工程消耗量定额及基价表(2013)")}</div>
        <div class="b">${mix("定额专业: 建筑工程")}</div>
        <div class="c">${mix("当前分部: 墙、柱面装饰与隔断、幕墙工程")}</div>
        <div class="d">计</div>
      </div>
      <task-bar></task-bar>
      <fee-window></fee-window>
      <ime-bar></ime-bar>
      <div class="badge">79</div>
      <svg class="mark" width="380" height="44" viewBox="0 0 380 44" aria-hidden="true"><ellipse cx="189.500" cy="21.500" rx="185" ry="17" fill="none" stroke="#f00" stroke-width="7" /></svg>`;
  }
}
